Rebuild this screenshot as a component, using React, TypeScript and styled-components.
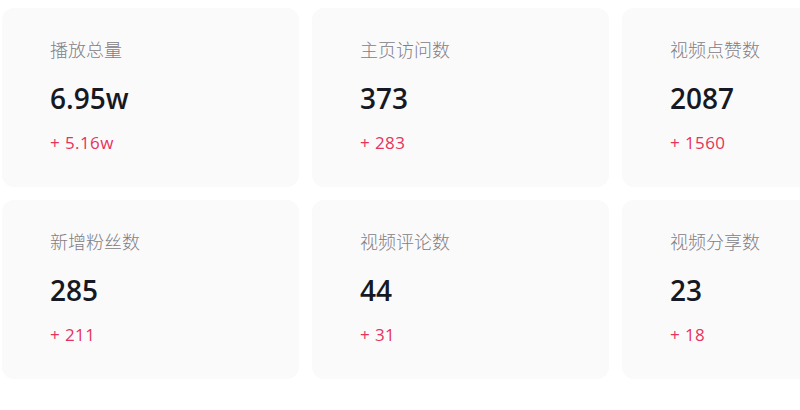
import React from 'react';
import styled, { createGlobalStyle } from 'styled-components';

const GlobalStyle = createGlobalStyle`
  html, body {
    margin: 0;
    padding: 0;
    background: #ffffff;
    font-family: 'Open Sans', 'Noto Sans CJK SC', sans-serif;
  }
`;

const stats = [
  { label: '播放总量', value: '6.95w', delta: '+ 5.16w' },
  { label: '主页访问数', value: '373', delta: '+ 283' },
  { label: '视频点赞数', value: '2087', delta: '+ 1560' },
  { label: '新增粉丝数', value: '285', delta: '+ 211' },
  { label: '视频评论数', value: '44', delta: '+ 31' },
  { label: '视频分享数', value: '23', delta: '+ 18' }
];

const Page = styled.main`
  width: 800px;
  height: 410px;
  overflow: hidden;
  padding: 8px 0 0 2px;
  box-sizing: border-box;
`;

const Grid = styled.div`
  display: grid;
  grid-template-columns: repeat(3, 297px);
  column-gap: 13px;
  row-gap: 13px;
`;

const Card = styled.div`
  height: 179px;
  box-sizing: border-box;
  padding: 30px 0 0 48px;
  background: #fafafb;
  border-radius: 12px;
  display: flex;
  flex-direction: column;
`;

const Label = styled.div`
  font-size: 18px;
  line-height: 24px;
  font-weight: 300;
  color: #7f8085;
`;

const Value = styled.div`
  margin-top: 18px;
  font-size: 28px;
  line-height: 36px;
  font-weight: 600;
  color: #161823;
`;

const Delta = styled.div`
  margin-top: 15px;
  font-size: 17px;
  line-height: 24px;
  font-weight: 400;
  letter-spacing: 0.4px;
  color: #e6335b;
`;

const App: React.FC = () => (
  <Page>
    <GlobalStyle />
    <Grid>
      {stats.map((s) => (
        <Card key={s.label}>
          <Label>{s.label}</Label>
          <Value>{s.value}</Value>
          <Delta>{s.delta}</Delta>
        </Card>
      ))}
    </Grid>
  </Page>
);

export default App;
